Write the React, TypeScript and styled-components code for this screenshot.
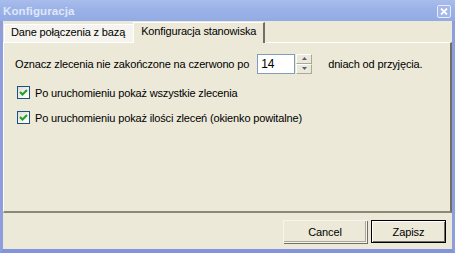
import React, { useState } from 'react'
import styled, { createGlobalStyle } from 'styled-components'

const GlobalStyle = createGlobalStyle`
	html, body {
		margin: 0;
		padding: 0;
		background: #ece9d8;
	}
	body {
		font-family: 'Liberation Sans', Arial, sans-serif;
		font-size: 11px;
		letter-spacing: -0.15px;
		color: #000;
	}
`

const Window = styled.div`
	width: 455px;
	height: 253px;
	display: flex;
	flex-direction: column;
	box-sizing: border-box;
	background: #ece9d8;
`

const TitleBar = styled.div`
	height: 21px;
	flex: none;
	display: flex;
	align-items: center;
	justify-content: space-between;
	padding: 0 4px 0 3px;
	background: linear-gradient(to bottom, #a9bdec 0%, #9cb3e8 40%, #93abe4 100%);
	color: #dfe7f8;
	font-weight: bold;
	font-size: 11.5px;
	letter-spacing: 0.1px;
`

const CloseButton = styled.div`
	width: 14px;
	height: 13px;
	box-sizing: border-box;
	border: 1px solid #e6ecfa;
	border-radius: 2px;
	background: #a4b7ea;
	display: flex;
	align-items: center;
	justify-content: center;
	margin-top: 2px;
`

const Body = styled.div`
	flex: 1;
	display: flex;
	flex-direction: column;
	border-left: 3px solid #8e9edd;
	border-right: 3px solid #8e9edd;
	border-bottom: 4px solid #8494dc;
	min-height: 0;
`

const Tabs = styled.div`
	display: flex;
	flex-direction: column;
	height: 192px;
	flex: none;
`

const TabStrip = styled.div`
	display: flex;
	align-items: flex-end;
	height: 21px;
	padding-left: 1px;
	position: relative;
	z-index: 1;
`

const Tab = styled.div<{ $active?: boolean }>`
	box-sizing: border-box;
	height: ${p => (p.$active ? '21px' : '18px')};
	padding: ${p => (p.$active ? '2px 7px 0 7px' : '1px 8px 0 6px')};
	margin-bottom: ${p => (p.$active ? '-1px' : '0')};
	background: ${p => (p.$active ? '#ece9d8' : '#f5f4ee')};
	border-top: 1px solid #fff;
	border-left: 1px solid #fff;
	border-right: ${p => (p.$active ? '2px solid #716f64' : 'none')};
	white-space: nowrap;
`

const Panel = styled.div`
	flex: 1;
	box-sizing: border-box;
	border-top: 1px solid #fff;
	border-left: 1px solid #fff;
	border-right: 2px solid #716f64;
	border-bottom: 2px solid #8a8878;
	padding: 10px 0 0 11px;
	display: flex;
	flex-direction: column;
`

const Row = styled.div`
	display: flex;
	align-items: center;
	height: 21px;
`

const SpinBox = styled.div`
	display: flex;
	margin-left: 8px;
	margin-right: 16px;
`

const SpinInput = styled.div`
	width: 38px;
	height: 20px;
	box-sizing: border-box;
	border: 1px solid #7f9db9;
	background: #fff;
	font-size: 12px;
	padding: 2px 0 0 3px;
`

const SpinButtons = styled.div`
	display: flex;
	flex-direction: column;
	width: 16px;
	height: 20px;
	margin-left: 1px;
`

const SpinButton = styled.div`
	flex: 1;
	box-sizing: border-box;
	border: 1px solid #fff;
	border-right-color: #aca899;
	border-bottom-color: #aca899;
	background: #ece9d8;
	display: flex;
	align-items: center;
	justify-content: center;
`

const CheckRow = styled.label`
	display: flex;
	align-items: center;
	height: 13px;
	margin-left: 2px;
	gap: 5px;
`

const Box = styled.span`
	width: 13px;
	height: 13px;
	box-sizing: border-box;
	border: 1px solid #1c5180;
	background: linear-gradient(135deg, #dcdcd7 0%, #fff 90%);
	display: flex;
	align-items: center;
	justify-content: center;
`

const Footer = styled.div`
	flex: 1;
	display: flex;
	justify-content: flex-end;
	align-items: flex-start;
	padding: 7px 6px 0 0;
	gap: 4px;
`

const Button = styled.button<{ $wide?: boolean; $default?: boolean }>`
	width: ${p => (p.$wide ? '84px' : '75px')};
	height: 23px;
	box-sizing: border-box;
	font-family: 'Liberation Sans', Arial, sans-serif;
	font-size: 11px;
	letter-spacing: -0.1px;
	color: #000;
	background: #ece9d8;
	padding: 0;
	border: 1px solid ${p => (p.$default ? '#000' : '#f5f4ee')};
	box-shadow: ${p =>
		p.$default
			? 'inset 1px 1px 0 #fff, inset -1px -1px 0 #716f64'
			: 'inset -1px -1px 0 #aca899, 1px 1px 0 #716f64'};
`

const Check = () => (
	<svg width="9" height="9" viewBox="0 0 9 9">
		<path d="M1 4 L3.5 6.5 L8 2" fill="none" stroke="#21a121" strokeWidth="2" />
	</svg>
)

const Arrow = ({ up }: { up?: boolean }) => (
	<svg width="5" height="3" viewBox="0 0 5 3">
		<path d={up ? 'M2.5 0 L5 3 L0 3 Z' : 'M0 0 L5 0 L2.5 3 Z'} fill="#4d6185" />
	</svg>
)

const App = () => {
	const [days] = useState(14)

	return (
		<Window>
			<GlobalStyle />
			<TitleBar>
				<span>Konfiguracja</span>
				<CloseButton>
					<svg width="8" height="7" viewBox="0 0 8 7">
						<path d="M1 0.5 L7 6.5 M7 0.5 L1 6.5" stroke="#fff" strokeWidth="1.8" />
					</svg>
				</CloseButton>
			</TitleBar>
			<Body>
				<Tabs>
					<TabStrip>
						<Tab>Dane połączenia z bazą</Tab>
						<Tab $active>Konfiguracja stanowiska</Tab>
					</TabStrip>
					<Panel>
						<Row>
							<span>Oznacz zlecenia nie zakończone na czerwono po</span>
							<SpinBox>
								<SpinInput>{days}</SpinInput>
								<SpinButtons>
									<SpinButton><Arrow up /></SpinButton>
									<SpinButton><Arrow /></SpinButton>
								</SpinButtons>
							</SpinBox>
							<span>dniach od przyjęcia.</span>
						</Row>
						<div style={{ height: 12 }} />
						<CheckRow>
							<Box><Check /></Box>
							Po uruchomieniu pokaż wszystkie zlecenia
						</CheckRow>
						<div style={{ height: 12 }} />
						<CheckRow>
							<Box><Check /></Box>
							Po uruchomieniu pokaż ilości zleceń (okienko powitalne)
						</CheckRow>
					</Panel>
				</Tabs>
				<Footer>
					<Button $wide>Cancel</Button>
					<Button $default>Zapisz</Button>
				</Footer>
			</Body>
		</Window>
	)
}

export default App
